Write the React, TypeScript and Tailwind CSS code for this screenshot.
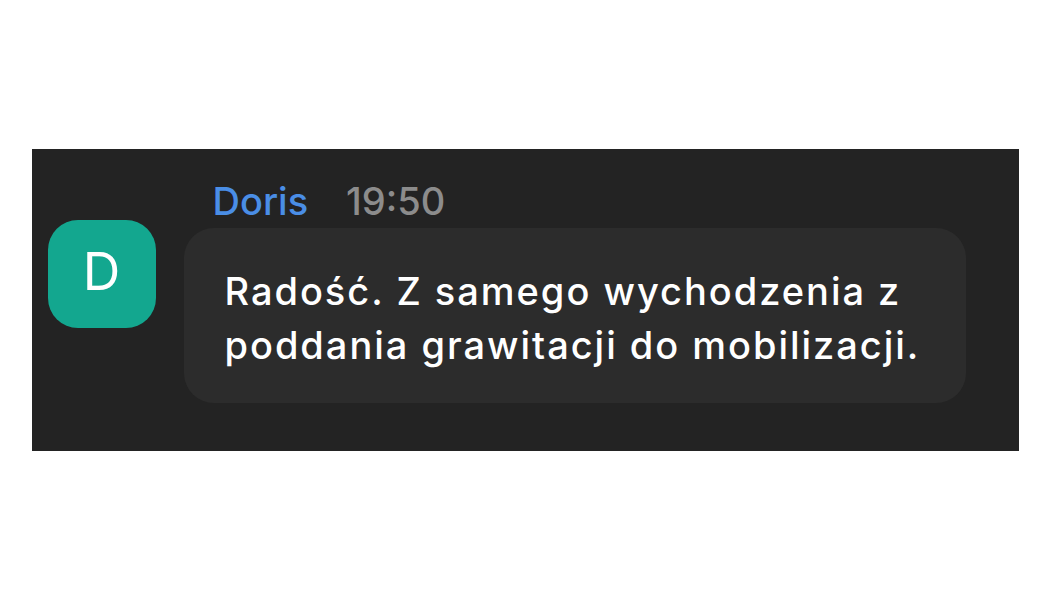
export default function App() {
  return (
    <div className="flex h-[600px] w-full items-center justify-center bg-white font-['Inter','Liberation_Sans',sans-serif]">
      <div className="flex h-[302px] w-[987px] items-start bg-[#232323] pl-[16px] pt-[33px]">
        <div className="mt-[38px] flex h-[108px] w-[108px] shrink-0 items-center justify-center rounded-[30px] bg-[#13a78f] pb-[4px] text-[52px] leading-none text-white">
          D
        </div>
        <div className="ml-[28px] flex flex-col">
          <div className="flex items-baseline gap-[38px] pl-[29px] text-[38px] font-medium leading-none">
            <span className="text-[#4a8ee6]">Doris</span>
            <span className="text-[#8c8c8c]">19:50</span>
          </div>
          <div className="mt-[8px] w-[782px] whitespace-nowrap rounded-[30px] bg-[#2c2c2c] pb-[31px] pl-[41px] pt-[36px] text-[38px] font-medium leading-[54px] tracking-[0.052em] text-white">
            <div>Radość. Z samego wychodzenia z</div>
            <div>poddania grawitacji do mobilizacji.</div>
          </div>
        </div>
      </div>
    </div>
  );
}
